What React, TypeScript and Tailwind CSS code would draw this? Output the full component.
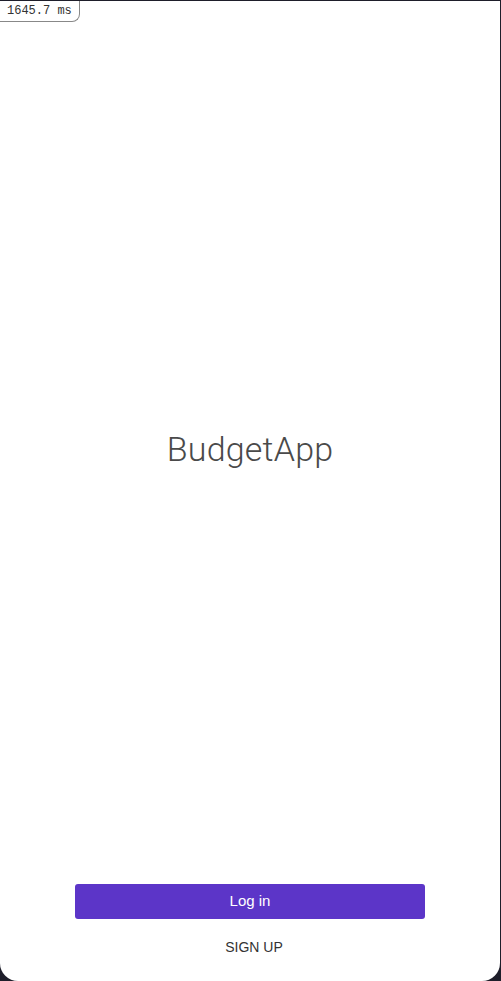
import React from "react";

export default function App() {
  return (
    <div className="w-[501px] h-[981px] bg-[#1e1e2a] pt-px pr-px">
      <div className="relative w-[500px] h-[980px] bg-white rounded-b-[18px] flex flex-col items-center" style={{ fontFamily: "'Liberation Sans', Arial, sans-serif" }}>
        <div className="absolute left-0 top-0 h-[21px] w-[80px] border-r border-b border-[#888] rounded-br-[8px] bg-white flex items-center pl-[7px] text-[12px] text-[#333]" style={{ fontFamily: "'Liberation Mono', monospace" }}>
          1645.7 ms
        </div>
        <div className="flex-1 flex items-center justify-center pt-[14px]">
          <h1 className="text-[34px] font-light text-[#4a4a4a] tracking-[0.2px]" style={{ fontFamily: "Roboto, 'Liberation Sans', sans-serif" }}>BudgetApp</h1>
        </div>
        <div className="w-[350px] flex flex-col items-center pb-[22px]">
          <button className="w-full h-[35px] rounded-[3px] bg-[#5c35c8] text-white text-[15px]">Log in</button>
          <button className="mt-[16px] h-[24px] pl-[8px] text-[14px] text-[#333]">SIGN UP</button>
        </div>
      </div>
    </div>
  );
}
